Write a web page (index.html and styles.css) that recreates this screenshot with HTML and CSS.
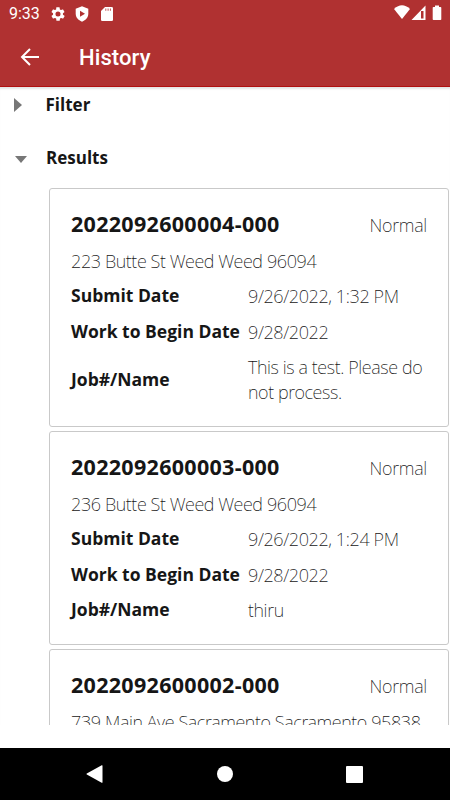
FILE: index.html
```html
<!DOCTYPE html>
<html lang="en">

<head>
    <meta charset="UTF-8">
    <meta name="viewport" content="width=device-width, initial-scale=1.0">
    <title>History</title>
    <link rel="stylesheet" href="styles.css">
</head>

<body>
    <header class="header">
        <div class="status">
            <span class="time">9:33</span>
            <svg class="gear" width="16" height="16" viewBox="0 0 24 24">
                <path fill="#fff" fill-rule="evenodd" d="M19.4 13a7.5 7.5 0 0 0 0-2l2.1-1.6a.5.5 0 0 0 .1-.6l-2-3.5a.5.5 0 0 0-.6-.2l-2.5 1a7.3 7.3 0 0 0-1.7-1l-.4-2.7a.5.5 0 0 0-.5-.4h-4a.5.5 0 0 0-.5.4L9.2 5.1a8 8 0 0 0-1.7 1L5 5.1a.5.5 0 0 0-.6.2l-2 3.5a.5.5 0 0 0 .1.6L4.6 11a8 8 0 0 0 0 2l-2.1 1.6a.5.5 0 0 0-.1.6l2 3.5c.1.2.4.3.6.2l2.5-1a7.3 7.3 0 0 0 1.7 1l.4 2.7c0 .2.2.4.5.4h4c.2 0 .5-.2.5-.4l.4-2.7a7.3 7.3 0 0 0 1.7-1l2.5 1c.2.1.5 0 .6-.2l2-3.5a.5.5 0 0 0-.1-.6zM12 15.8a3.8 3.8 0 1 1 0-7.6 3.8 3.8 0 0 1 0 7.6z" />
            </svg>
            <svg class="shield" width="14" height="16" viewBox="0 0 14 16">
                <path fill="#fff" d="M7 .3 13.3 2.7v5c0 3.5-2.5 6.5-6.3 8-3.8-1.5-6.3-4.5-6.3-8v-5z" />
                <path fill="#b03131" d="M5 4.7v6L10 7.7z" />
            </svg>
            <svg class="sdcard" width="12" height="14" viewBox="0 0 12 14">
                <path fill="#fff" d="M4 0h6.5Q12 0 12 1.3v11.4Q12 14 10.7 14H1.3Q0 14 0 12.7V4z" />
                <path stroke="#b03131" stroke-width=".8" d="M4.8 1.5v2.3M7.1 1.5v2.3M9.4 1.5v2.3" />
            </svg>
            <svg class="signals" width="49" height="16" viewBox="0 0 49 16">
                <path fill="#fff" d="M0 4Q8-3.5 16 4L8 14z" />
                <path fill="#fff" fill-rule="evenodd" d="M31.5.5V15H17.5zM27 6v7.500h2.500V6z" />
                <path fill="#fff" d="M41 .5h4V2h1.500q.8 0 .8.8v11.400q0 .8-.8.8h-7q-.8 0-.8-.8V2.800q0-.8.8-.8H41z" />
            </svg>
        </div>
        <div class="app-bar">
            <svg width="20" height="18" viewBox="0 0 20 18">
                <path fill="none" stroke="#fff" stroke-width="2" d="M19 9H2M10 1 2 9l8 8" />
            </svg>
            <h1>History</h1>
        </div>
    </header>

    <main class="content">
        <div class="section">
            <span class="arrow right"></span>
            <h2>Filter</h2>
        </div>
        <div class="section">
            <span class="arrow down"></span>
            <h2>Results</h2>
        </div>

        <div class="results">
            <div class="card">
                <div class="card-head">
                    <h3>2022092600004-000</h3>
                    <span class="priority">Normal</span>
                </div>
                <p class="address">223 Butte St Weed Weed 96094</p>
                <dl>
                    <dt>Submit Date</dt>
                    <dd>9/26/2022, 1:32 PM</dd>
                    <dt>Work to Begin Date</dt>
                    <dd>9/28/2022</dd>
                    <dt>Job#/Name</dt>
                    <dd>This is a test. Please do<br>not process.</dd>
                </dl>
            </div>

            <div class="card">
                <div class="card-head">
                    <h3>2022092600003-000</h3>
                    <span class="priority">Normal</span>
                </div>
                <p class="address">236 Butte St Weed Weed 96094</p>
                <dl>
                    <dt>Submit Date</dt>
                    <dd>9/26/2022, 1:24 PM</dd>
                    <dt>Work to Begin Date</dt>
                    <dd>9/28/2022</dd>
                    <dt>Job#/Name</dt>
                    <dd>thiru</dd>
                </dl>
            </div>

            <div class="card">
                <div class="card-head">
                    <h3>2022092600002-000</h3>
                    <span class="priority">Normal</span>
                </div>
                <p class="address">739 Main Ave Sacramento Sacramento 95838</p>
            </div>
        </div>
    </main>

    <nav class="nav">
        <svg width="17" height="18" viewBox="0 0 17 18">
            <path fill="#fff" d="M15.7.2Q16.5 0 16.5.8v16.400q0 .8-.8.5L.8 9.600Q0 9 .8 8.400z" />
        </svg>
        <span class="home"></span>
        <span class="recent"></span>
    </nav>
</body>

</html>
```

FILE: styles.css
```css
* {
    box-sizing: border-box;
}

body {
    margin: 0;
    height: 800px;
    display: flex;
    flex-direction: column;
    overflow: hidden;
    background: #fff;
    color: #161616;
    font-family: "Open Sans", "Noto Sans", sans-serif;
}

h1,
h2,
h3,
p,
dl,
dd {
    margin: 0;
}

.header {
    height: 87px;
    flex: none;
    background: #b03131;
    border-bottom: 1px solid #b01010;
    color: #fff;
    font-family: Roboto, sans-serif;
}

.status {
    height: 27px;
    padding: 0 7px 0 9px;
    display: flex;
    align-items: center;
}

.time {
    width: 41px;
    font-size: 16px;
    line-height: 27px;
}

.shield {
    margin-left: 9px;
}

.sdcard {
    margin-left: 12px;
}

.signals {
    margin-left: auto;
    margin-top: -1px;
}

.app-bar {
    height: 59px;
    padding-left: 20px;
    display: flex;
    align-items: center;
}

.app-bar h1 {
    margin: 3px 0 0 39px;
    font-size: 22px;
    font-weight: 500;
    line-height: 30px;
    letter-spacing: .1px;
}

.content {
    height: 638px;
    flex: none;
    overflow: hidden;
    box-shadow: inset 0 3px 2px -1px #e4e4e4;
}

.section {
    height: 36px;
    display: flex;
    align-items: center;
}

.section + .section {
    margin-top: 17px;
}

.section h2 {
    font-size: 17px;
    line-height: 24px;
}

.arrow {
    border: 6px solid transparent;
}

.right {
    margin: 0 23.5px 0 14px;
    border-width: 7px 0 7px 8px;
    border-left-color: #777;
}

.down {
    margin: 2px 18px 0 15px;
    border-width: 7px 6.5px 0;
    border-top-color: #777;
}

.section .down + h2 {
    padding-left: 1px;
}

.results {
    margin: 12px 1px 0 49px;
    display: flex;
    flex-direction: column;
    gap: 4px;
}

.card {
    padding: 17px 21px 16.5px;
    border: 1px solid #c9c9c9;
    border-radius: 3px;
    white-space: nowrap;
}

.card-head {
    height: 36px;
    display: flex;
    justify-content: space-between;
    align-items: center;
}

.card-head h3 {
    font-size: 21.5px;
    line-height: 36px;
    letter-spacing: .3px;
}

.priority,
.address,
dd {
    font-family: "Noto Sans", "Open Sans", sans-serif;
    font-size: 18px;
    font-weight: 200;
    line-height: 25px;
    letter-spacing: -.38px;
}

.priority {
    margin-top: 2px;
    letter-spacing: -.25px;
}

.address {
    height: 36px;
    line-height: 38px;
}

dl {
    display: grid;
    grid-template-columns: 177px 1fr;
    align-items: center;
}

dt {
    font-size: 17.5px;
    font-weight: bold;
    line-height: 25px;
}

dd {
    padding: 6px 0 4.5px;
}

.nav {
    height: 52px;
    margin-top: auto;
    padding: 0 87px 0 86px;
    display: flex;
    align-items: center;
    justify-content: space-between;
    background: #000;
}

.home {
    width: 16px;
    height: 16px;
    border-radius: 50%;
    background: #fff;
}

.recent {
    width: 17px;
    height: 17px;
    border-radius: 1px;
    background: #fff;
}
```
